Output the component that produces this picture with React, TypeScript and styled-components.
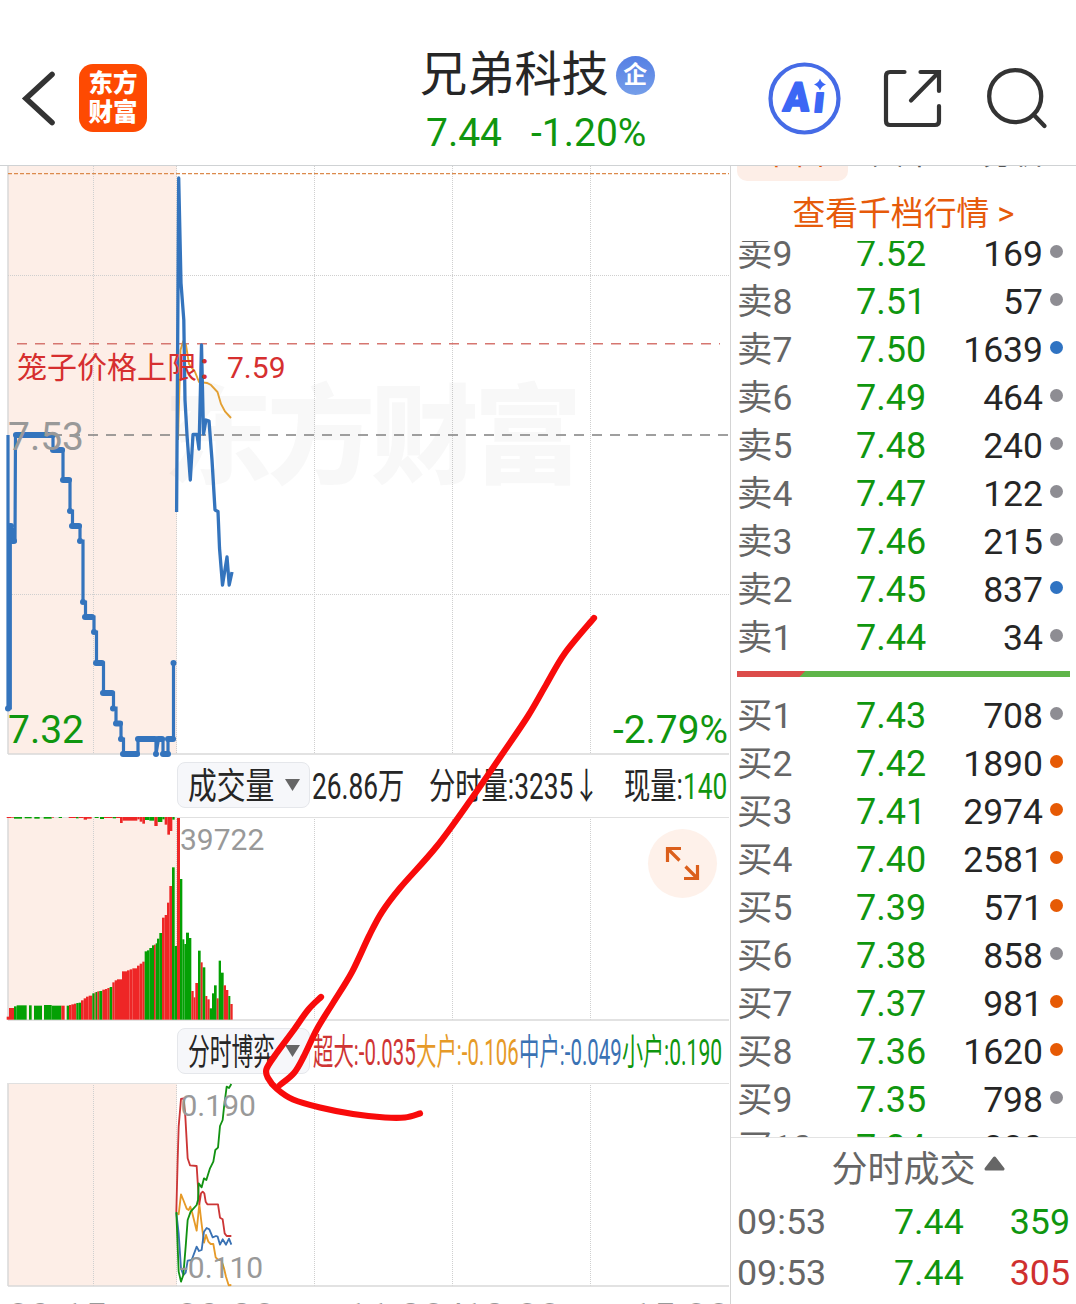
import React from "react";
import styled, { createGlobalStyle } from "styled-components";

const GREEN = "#0f960f";
const RED = "#cf302f";
const BLUE = "#3474bd";
const ORANGE = "#e65a0a";
const GRID = "#cfcfcf";

const Global = createGlobalStyle`
  html, body { margin: 0; padding: 0; background: #fff; }
  body {
    font-family: Roboto, "Noto Sans CJK SC", sans-serif;
    color: #262626;
    overflow: hidden;
  }
  * { box-sizing: border-box; }
`;

const Screen = styled.div`
  position: relative;
  width: 1076px;
  height: 1304px;
  overflow: hidden;
  display: flex;
  flex-direction: column;
  background: #fff;
`;

/* ---------- header ---------- */

const Header = styled.header`
  flex: none;
  height: 166px;
  padding: 0 28px 0 20px;
  display: grid;
  grid-template-columns: 400px 340px 1fr;
  border-bottom: 1px solid #cfd2d4;
`;

const HeaderLeft = styled.div`
  display: flex;
  align-items: center;
  gap: 19px;
  padding-top: 31px;
`;

const Logo = styled.div`
  width: 68px;
  height: 68px;
  border-radius: 14px;
  background: #fe4a02;
  color: #fff;
  font-weight: 900;
  font-size: 24.5px;
  line-height: 28.5px;
  text-align: center;
  padding-top: 6px;
`;

const HeaderTitle = styled.div`
  padding-top: 46px;
`;

const NameLine = styled.div`
  display: flex;
  align-items: center;
  gap: 7px;
  height: 58px;
`;

const Name = styled.h1`
  margin: 0;
  font-size: 47.2px;
  font-weight: 400;
  line-height: 60px;
`;

const CompanyBadge = styled.span`
  width: 39px;
  height: 39px;
  border-radius: 50%;
  background: linear-gradient(#557fe4, #759ee9);
  color: #fff;
  font-size: 24px;
  font-weight: 700;
  line-height: 38px;
  text-align: center;
`;

const QuoteLine = styled.div`
  display: flex;
  gap: 29px;
  padding: 1px 0 0 6px;
  font-size: 39px;
  line-height: 57px;
  color: ${GREEN};
`;

const HeaderActions = styled.div`
  display: flex;
  align-items: center;
  gap: 42px;
  padding: 32px 0 0 8px;

  & > :last-child {
    margin-left: 1px;
  }
`;

/* ---------- body ---------- */

const Body = styled.div`
  flex: 1;
  display: flex;
  min-height: 0;
`;

const Charts = styled.main`
  width: 730px;
  flex: none;
  display: flex;
  flex-direction: column;
`;

const Chart = styled.svg`
  display: block;
  flex: none;
  overflow: visible;
`;

const AxisText = styled.text<{ $size?: number; $color?: string }>`
  font-family: Roboto, "Noto Sans CJK SC", sans-serif;
  font-size: ${(p) => p.$size ?? 30}px;
  fill: ${(p) => p.$color ?? "#999"};
`;

const Watermark = styled.text`
  font-family: "Noto Sans CJK SC", sans-serif;
  font-size: 108px;
  font-weight: 900;
  fill: rgba(90, 90, 90, 0.045);
`;

const IndicatorBar = styled.div<{ $h: number; $top: number }>`
  flex: none;
  height: ${(p) => p.$h}px;
  padding: ${(p) => p.$top}px 0 0 177px;
  display: flex;
  align-items: flex-start;
`;

const Picker = styled.button`
  flex: none;
  width: 133px;
  height: 46px;
  margin: 0;
  padding: 0 9px 0 10px;
  display: flex;
  align-items: center;
  justify-content: space-between;
  border: 1px solid #e5e7eb;
  border-radius: 8px;
  background: #f6f7fa;
  font-family: inherit;
  color: #262626;
`;

const Slot = styled.span<{ $w: number; $gap?: number }>`
  display: block;
  flex: none;
  width: ${(p) => p.$w}px;
  height: 46px;
  margin-left: ${(p) => p.$gap ?? 0}px;
`;

const Squeezed = styled.span<{ $scale: number; $color?: string }>`
  display: inline-block;
  white-space: nowrap;
  font-size: 36px;
  line-height: 50px;
  color: ${(p) => p.$color ?? "inherit"};
  transform: scaleX(${(p) => p.$scale});
  transform-origin: left center;
`;

const Green = styled.span`
  color: ${GREEN};
`;

const VolumeArea = styled.div`
  position: relative;
  height: 203px;
  flex: none;
`;

const Expand = styled.button`
  position: absolute;
  top: 12px;
  right: 13px;
  width: 69px;
  height: 69px;
  padding: 0;
  border: 0;
  border-radius: 50%;
  background: #fef1ea;
`;

const TimeAxis = styled.div`
  display: flex;
  justify-content: space-between;
  padding: 10px 0 0 7px;
  font-size: 40px;
  line-height: 46px;
  color: #999;
  white-space: nowrap;
`;

/* ---------- order book ---------- */

const Book = styled.aside`
  flex: 1;
  display: flex;
  flex-direction: column;
  border-left: 1px solid #d4d4d4;
  min-width: 0;
`;

const Tabs = styled.div`
  flex: none;
  height: 15px;
  padding-left: 6px;
  display: flex;
  align-items: flex-end;
  overflow: hidden;
`;

const Tab = styled.div<{ $active?: boolean }>`
  width: 111px;
  height: 54px;
  line-height: 52px;
  border-radius: 10px;
  font-size: 32px;
  text-align: center;
  background: ${(p) => (p.$active ? "#fdeee7" : "transparent")};
  color: ${(p) => (p.$active ? ORANGE : "#555")};
`;

const MoreLevels = styled.a`
  flex: none;
  height: 60px;
  line-height: 66px;
  font-size: 32.8px;
  text-align: center;
  color: ${ORANGE};
`;

const Levels = styled.div<{ $h: number; $end?: boolean }>`
  flex: none;
  height: ${(p) => p.$h}px;
  overflow: hidden;
  padding: 0 13px 0 6px;
  display: flex;
  flex-direction: column;
  justify-content: ${(p) => (p.$end ? "flex-end" : "flex-start")};
`;

const Level = styled.div`
  flex: none;
  height: 48px;
  display: grid;
  grid-template-columns: 119px 1fr 20px;
  font-size: 36px;
  line-height: 49px;
`;

const LevelName = styled.span`
  font-size: 35.5px;
  color: #666;
`;

const Pair = styled.span`
  display: flex;
  justify-content: space-between;
`;

const Price = styled.span`
  color: ${GREEN};
`;

const Quantity = styled.span`
  font-size: 35.5px;
`;

const Dot = styled.i<{ $color: string }>`
  width: 13px;
  height: 13px;
  margin: 15px 0 0 7px;
  border-radius: 50%;
  background: ${(p) => p.$color};
`;

const Ratio = styled.div`
  flex: none;
  height: 6px;
  margin: 9px 6px 15px;
  background: linear-gradient(135deg, #dc4c4a 0 48px, #5fb54a 48.5px);
`;

const TradesTitle = styled.div`
  flex: none;
  height: 60px;
  border-top: 1px solid #e3e3e3;
  display: flex;
  justify-content: center;
  gap: 8px;
  padding: 0 29px 0 58px;
  font-size: 36px;
  line-height: 64px;
  color: #666;
`;

const Trade = styled.div`
  flex: none;
  display: grid;
  grid-template-columns: 157px 1fr auto;
  padding: 0 6px;
  height: 51px;
  font-size: 35.8px;
  line-height: 51px;
  color: #666;
`;

const TradeVolume = styled.span<{ $up?: boolean }>`
  color: ${(p) => (p.$up ? RED : GREEN)};
`;

const Annotation = styled.svg`
  position: absolute;
  left: 0;
  top: 0;
  pointer-events: none;
`;

/* ---------- data ---------- */

type LevelRow = [string, string, string, "g" | "b" | "o"];

const dotColors = { g: "#8e8d93", b: "#2f73c2", o: "#e65a05" };

const sells: LevelRow[] = [
  ["卖9", "7.52", "169", "g"],
  ["卖8", "7.51", "57", "g"],
  ["卖7", "7.50", "1639", "b"],
  ["卖6", "7.49", "464", "g"],
  ["卖5", "7.48", "240", "g"],
  ["卖4", "7.47", "122", "g"],
  ["卖3", "7.46", "215", "g"],
  ["卖2", "7.45", "837", "b"],
  ["卖1", "7.44", "34", "g"],
];

const buys: LevelRow[] = [
  ["买1", "7.43", "708", "g"],
  ["买2", "7.42", "1890", "o"],
  ["买3", "7.41", "2974", "o"],
  ["买4", "7.40", "2581", "o"],
  ["买5", "7.39", "571", "o"],
  ["买6", "7.38", "858", "g"],
  ["买7", "7.37", "981", "o"],
  ["买8", "7.36", "1620", "o"],
  ["买9", "7.35", "798", "g"],
  ["买10", "7.34", "880", "g"],
];

// horizontal runs of the auction price: [x from, x to, y]
const auctionRuns: [number, number, number][] = [
  [8, 8, 708.5], [10, 11, 526], [12, 14, 541], [16, 53, 435], [53, 62, 450],
  [63, 69, 480], [70, 70, 511], [72, 79, 526], [80, 80, 541], [83, 83, 602],
  [85, 92, 617], [94, 94, 632], [96, 102, 663], [103, 112, 693], [113, 113, 708.5],
  [116, 120, 723.5], [121, 121, 739], [123, 137, 754], [138, 155, 739],
  [156, 156, 754], [158, 162, 739], [163, 168, 754], [168, 173, 739], [173.5, 173.5, 663],
];

const auctionLine =
  "8,708 8,435 8,708 10.3,708 10.3,526 12,541 12,528 13,541 15,541 15.5,435 53,435 53,450 63,450 63,480 70,480 70,511 72.5,511 72.5,526 80,526 80,541 83,541 83,602 85.5,602 85.5,617 94,617 94,632 96.5,632 96.5,663 103.5,663 103.5,693 113.5,693 113.5,708 116,708 116,723 121,723 121,739 123.5,739 123.5,754 138,754 138,739 156,739 156,754 158.5,739 163,739 163,754 168,754 168,739 173.5,739 173.5,663";

const priceLine =
  "176.6,512 178.7,178 181,283 183.8,320 185,400 187,435 190.3,480 193,434.5 197,434.5 199,449 201.5,345 203.5,434 206,420 209,421 212,460 215,510 218,511.5 219.5,548 222.5,585 227,557 229.2,585 232,572";

const averageLine =
  "178,440 180.5,350 183,342 186,345 189,364 195,372 199,382 207,383 211,385 217.5,392 221,404 225,411.5 231,418";

// volume bars: [x from, x to, top, colour]; three units to the pixel
type Bar = [number, number, number, "r" | "g"];

const volumeBars: Bar[] = [
  [20, 27, 800, "r"], [27, 42, 774, "r"], [42, 50, 769, "g"], [50, 80, 766, "g"],
  [87, 95, 766, "g"], [102, 126, 767, "g"], [132, 155, 765, "g"], [155, 184, 767, "g"],
  [184, 194, 767, "r"], [200, 207, 767, "g"], [207, 214, 765, "r"], [214, 222, 763, "r"],
  [222, 229, 761, "r"], [229, 236, 759, "g"], [236, 243, 758, "g"], [243, 251, 751, "r"],
  [251, 258, 745, "r"], [258, 266, 740, "r"], [266, 277, 737, "r"], [277, 284, 730, "g"],
  [284, 287, 727, "r"], [287, 292, 726, "g"], [292, 298, 724, "r"], [298, 307, 723, "g"],
  [307, 315, 719, "r"], [315, 322, 717, "r"], [322, 329, 714, "r"], [329, 337, 711, "g"],
  [337, 344, 697, "r"], [344, 351, 691, "r"], [351, 366, 688, "r"], [366, 381, 664, "r"],
  [381, 389, 661, "r"], [389, 397, 658, "r"], [397, 411, 655, "r"], [411, 419, 647, "r"],
  [419, 427, 641, "r"], [427, 434, 635, "r"], [434, 441, 604, "g"], [441, 448, 601, "g"],
  [448, 456, 594, "g"], [456, 462, 586, "g"], [462, 467, 584, "r"], [467, 471, 580, "g"],
  [471, 478, 566, "g"], [478, 486, 549, "g"], [486, 494, 503, "r"], [494, 501, 495, "r"],
  [501, 508, 458, "r"], [508, 516, 408, "r"], [516, 524, 352, "g"], [524, 531, 588, "g"],
  [531, 540, 204, "r"], [540, 547, 387, "g"], [547, 553, 568, "g"], [553, 558, 582, "g"],
  [558, 567, 548, "g"], [567, 574, 564, "g"], [574, 581, 723, "r"], [581, 586, 742, "r"],
  [586, 594, 699, "r"], [594, 602, 602, "g"], [602, 608, 637, "r"], [608, 616, 652, "g"],
  [616, 622, 738, "r"], [622, 629, 748, "r"], [629, 636, 775, "g"], [636, 642, 730, "g"],
  [642, 650, 706, "g"], [650, 656, 745, "r"], [656, 663, 632, "g"], [663, 671, 668, "g"],
  [671, 678, 706, "r"], [678, 685, 720, "r"], [685, 691, 738, "g"], [691, 698, 762, "r"],
];

const unmatchedBars: Bar[] = [
  [20, 33, 204, "r"], [33, 42, 203, "r"], [42, 66, 206, "g"], [74, 95, 205, "g"],
  [103, 119, 206, "g"], [131, 155, 206, "g"], [155, 162, 203, "r"], [176, 186, 204, "g"],
  [206, 228, 204, "r"], [228, 236, 205, "g"], [236, 251, 204, "r"], [251, 261, 209, "r"],
  [261, 275, 206, "r"], [284, 296, 204, "g"], [300, 312, 207, "g"], [312, 338, 204, "r"],
  [338, 348, 205, "g"], [348, 360, 204, "r"], [360, 368, 219, "r"], [368, 412, 212, "r"],
  [412, 419, 208, "r"], [419, 427, 215, "r"], [427, 435, 221, "r"], [435, 448, 210, "g"],
  [448, 463, 212, "g"], [463, 473, 228, "r"], [473, 487, 216, "g"], [487, 494, 208, "g"],
  [494, 502, 224, "r"], [502, 510, 254, "r"], [510, 517, 243, "r"], [517, 524, 209, "g"],
];

const flows: [string, string][] = [
  ["#e69a28", "529,578 536,583 543,523 550,540 560,566 566,570 571,560 577,580 590,632 598,552 604,605 612,668 618,645 625,665 632,672 640,672 647,712 655,720 664,720 672,745 678,770 686,796 694,795"],
  ["#cc3636", "529,576 533,420 536,320 543,237 551,235 556,290 563,415 570,436 590,438 594,500 598,552 603,520 608,515 613,520 617,545 622,553 654,553 660,593 668,598 674,640 680,648 694,648"],
  ["#3a72b4", "529,578 536,640 543,745 550,765 557,758 563,722 575,720 590,680 597,693 605,690 612,635 620,624 628,628 638,652 648,648 653,650 660,674 668,658 678,674 687,656 694,674"],
  ["#129212", "529,576 536,755 543,785 550,765 557,680 563,600 572,575 590,555 594,540 596,490 605,502 612,475 619,480 630,445 640,425 646,390 654,383 660,318 668,300 672,262 680,200 687,204 694,192"],
];

type Point = [number, number];

const shaft: Point[] = [
  [594, 618], [565, 653], [546, 685], [528, 716], [503, 753], [472, 798], [437, 846],
  [400, 888], [382, 912], [369, 936], [352, 972], [333, 1003], [317, 1029], [304, 1056],
  [294, 1073], [280, 1085],
];

const head: Point[] = [
  [321, 997], [308, 1010], [293, 1031], [276, 1054], [266.5, 1069], [268, 1078],
  [277, 1089], [293, 1099.5], [320, 1107.5], [353, 1114], [385, 1117.5], [405, 1117.5],
  [420, 1113.5],
];

/* ---------- pieces ---------- */

// a smooth curve through all of the points
function smooth(pts: Point[]) {
  let d = `M${pts[0][0]} ${pts[0][1]}`;
  for (let i = 0; i < pts.length - 1; i++) {
    const p0 = pts[Math.max(i - 1, 0)];
    const p1 = pts[i];
    const p2 = pts[i + 1];
    const p3 = pts[Math.min(i + 2, pts.length - 1)];
    const c1 = [p1[0] + (p2[0] - p0[0]) / 6, p1[1] + (p2[1] - p0[1]) / 6];
    const c2 = [p2[0] - (p3[0] - p1[0]) / 6, p2[1] - (p3[1] - p1[1]) / 6];
    d += `C${c1[0]} ${c1[1]} ${c2[0]} ${c2[1]} ${p2[0]} ${p2[1]}`;
  }
  return d;
}

const barFill = { r: "#ee2626", g: "#04a004" };

function Frame({ top, bottom }: { top: number; bottom: number }) {
  return (
    <g>
      <rect x={8} y={top} width={169} height={bottom - top} fill="#fdeee7" />
      {[93.5, 176.5, 314.5, 452.5, 590.5].map((x) => (
        <line key={x} x1={x} x2={x} y1={top} y2={bottom} stroke={GRID} strokeDasharray="1 1" />
      ))}
      <line x1={8} x2={8} y1={top} y2={bottom} stroke="#d8d8d8" strokeWidth={1.5} />
      <line x1={8} x2={729} y1={bottom} y2={bottom} stroke="#d8d8d8" strokeWidth={1.6} />
    </g>
  );
}

function Triangle() {
  return (
    <svg width={15} height={12} viewBox="0 0 15 12">
      <path d="M0 0H15L7.5 12Z" fill="#666" />
    </svg>
  );
}

function PriceChart() {
  return (
    <Chart width={730} height={588} viewBox="0 166 730 588">
      <Frame top={166} bottom={754} />
      {[275.5, 594.5].map((y) => (
        <line key={y} x1={8} x2={729} y1={y} y2={y} stroke={GRID} strokeDasharray="1 1" />
      ))}
      <Watermark x={164} y={475} textLength={418}>东方财富</Watermark>
      <line x1={8} x2={729} y1={173.6} y2={173.6} stroke="#dc8a4c" strokeWidth={1.4} strokeDasharray="4 2" />
      <line x1={17} x2={720} y1={343.7} y2={343.7} stroke="#d67670" strokeWidth={1.5} strokeDasharray="10 8" />
      <line x1={16} x2={729} y1={435} y2={435} stroke="#808080" strokeWidth={1.6} strokeDasharray="10 8" />
      <polyline points={averageLine} fill="none" stroke="#e3a033" strokeWidth={1.9} />
      <g stroke={BLUE} fill="none">
        <polyline points={auctionLine} strokeWidth={3.2} />
        {auctionRuns.map(([a, b, y], i) => (
          <line key={i} x1={a} x2={b + 0.01} y1={y} y2={y} strokeWidth={6} strokeLinecap="round" />
        ))}
        <polyline points={priceLine} strokeWidth={3.3} strokeLinejoin="round" />
      </g>
      <AxisText x={17} y={378} $color="#d62f2f">笼子价格上限：7.59</AxisText>
      <AxisText x={8} y={450} $size={39}>7.53</AxisText>
      <AxisText x={8} y={743} $size={39} $color={GREEN}>7.32</AxisText>
      <AxisText x={728} y={743} $size={38.9} $color={GREEN} textAnchor="end">-2.79%</AxisText>
    </Chart>
  );
}

function VolumeChart() {
  return (
    <Chart width={730} height={203} viewBox="0 817 730 203">
      <Frame top={817} bottom={1020} />
      <line x1={8} x2={729} y1={817.5} y2={817.5} stroke="#e0e0e0" />
      {unmatchedBars.map(([a, b, y, c]) => (
        <rect key={a} x={a / 3} y={817} width={(b - a) / 3} height={(y - 201) / 3} fill={barFill[c]} />
      ))}
      {volumeBars.map(([a, b, y, c]) => (
        <rect key={a} x={a / 3} y={750 + y / 3} width={(b - a) / 3} height={(809 - y) / 3} fill={barFill[c]} />
      ))}
      <AxisText x={180} y={850}>39722</AxisText>
    </Chart>
  );
}

function FlowChart() {
  return (
    <Chart width={730} height={203} viewBox="0 1083 730 203">
      <Frame top={1083} bottom={1286} />
      <line x1={8} x2={729} y1={1083.5} y2={1083.5} stroke="#e0e0e0" />
      <g transform="translate(0 1020) scale(0.33333)">
        {flows.map(([color, points]) => (
          <polyline key={color} points={points} fill="none" stroke={color} strokeWidth={5.5} strokeLinejoin="round" />
        ))}
      </g>
      <AxisText x={180.5} y={1116}>0.190</AxisText>
      <AxisText x={179.5} y={1278}>-0.110</AxisText>
    </Chart>
  );
}

function Rows({ rows }: { rows: LevelRow[] }) {
  return (
    <>
      {rows.map(([name, price, qty, dot]) => (
        <Level key={name}>
          <LevelName>{name}</LevelName>
          <Pair>
            <Price>{price}</Price>
            <Quantity>{qty}</Quantity>
          </Pair>
          <Dot $color={dotColors[dot]} />
        </Level>
      ))}
    </>
  );
}

export default function App() {
  return (
    <>
      <Global />
      <Screen>
        <Header>
          <HeaderLeft>
            <svg width={40} height={60} viewBox="20 68 40 60" fill="none" stroke="#333" strokeWidth={5.6} strokeLinecap="round">
              <path d="M52 74.5L26 98.5L52 122.5" />
            </svg>
            <Logo>东方<br />财富</Logo>
          </HeaderLeft>
          <HeaderTitle>
            <NameLine>
              <Name>兄弟科技</Name>
              <CompanyBadge>企</CompanyBadge>
            </NameLine>
            <QuoteLine>
              <span>7.44</span>
              <span>-1.20%</span>
            </QuoteLine>
          </HeaderTitle>
          <HeaderActions>
            <svg width={73} height={73} viewBox="767.5 62 73 73">
              <circle cx={804} cy={98.5} r={34} fill="#fff" stroke="#456be6" strokeWidth={4.2} />
              <g fill="#3c67f5" stroke="#3c67f5" strokeLinejoin="round" fontFamily="Roboto, sans-serif" fontWeight={900}>
                <text transform="translate(782 110.5) skewX(-6)" fontSize={40} strokeWidth={2} textLength={26} lengthAdjust="spacingAndGlyphs">A</text>
                <text transform="translate(812.5 112) skewX(-6)" fontSize={36} strokeWidth={2}>ı</text>
                <path stroke="none" d="M819.5 78.5Q821 83 825.5 84.5Q821 86 819.5 90.5Q818 86 813.5 84.5Q818 83 819.5 78.5Z" />
              </g>
            </svg>
            <svg width={60} height={60} viewBox="883 69 60 60" fill="none" stroke="#333" strokeWidth={4.2} strokeLinecap="round">
              <path d="M904.5 72H890Q886 72 886 76V121Q886 125 890 125H935Q939 125 939 121V106" />
              <path d="M920.5 72H939V91M938 73L911 100.5" />
            </svg>
            <svg width={62} height={62} viewBox="985.5 67.5 62 62" fill="none" stroke="#333" strokeWidth={4.3} strokeLinecap="round">
              <circle cx={1014.7} cy={95.7} r={26} />
              <path d="M1033 114L1044 125.5" />
            </svg>
          </HeaderActions>
        </Header>
        <Body>
          <Charts>
            <PriceChart />
            <IndicatorBar $h={63} $top={8}>
              <Picker>
                <Slot $w={88}><Squeezed $scale={0.8}>成交量</Squeezed></Slot>
                <Triangle />
              </Picker>
              <Slot $w={92} $gap={2}><Squeezed $scale={0.73}>26.86万</Squeezed></Slot>
              <Slot $w={175} $gap={24.5}><Squeezed $scale={0.73}>分时量:3235↓</Squeezed></Slot>
              <Slot $w={104} $gap={20.5}><Squeezed $scale={0.73}>现量:<Green>140</Green></Squeezed></Slot>
            </IndicatorBar>
            <VolumeArea>
              <VolumeChart />
              <Expand>
                <svg width={69} height={69} viewBox="648 829 69 69" fill="none" stroke="#db5f1c" strokeWidth={3.2}>
                  <path d="M681 848.5H667.5V862M667.5 848.5L679.5 860.5" />
                  <path d="M684 878.5H697.5V865M697.5 878.5L685.5 866.5" />
                </svg>
              </Expand>
            </VolumeArea>
            <IndicatorBar $h={63} $top={8}>
              <Picker>
                <Slot $w={88}><Squeezed $scale={0.605}>分时博弈</Squeezed></Slot>
                <Triangle />
              </Picker>
              <Slot $w={103} $gap={2.5}><Squeezed $scale={0.567} $color="#cf3534">超大:-0.035</Squeezed></Slot>
              <Slot $w={103}><Squeezed $scale={0.567} $color="#e69a28">大户:-0.106</Squeezed></Slot>
              <Slot $w={103}><Squeezed $scale={0.567} $color="#3a72b4">中户:-0.049</Squeezed></Slot>
              <Slot $w={102}><Squeezed $scale={0.585} $color={GREEN}>小户:0.190</Squeezed></Slot>
            </IndicatorBar>
            <FlowChart />
            <TimeAxis>
              <span>09:15</span>
              <span>09:30</span>
              <span>11:30/13:00</span>
              <span>15:00</span>
            </TimeAxis>
          </Charts>
          <Book>
            <Tabs>
              <Tab $active>千档</Tab>
              <Tab>大单</Tab>
              <Tab>分价</Tab>
            </Tabs>
            <MoreLevels>查看千档行情 &gt;</MoreLevels>
            <Levels $h={421} $end>
              <Rows rows={sells} />
            </Levels>
            <Ratio />
            <Levels $h={445}>
              <Rows rows={buys} />
            </Levels>
            <TradesTitle>
              分时成交
              <svg width={21} height={59} viewBox="0 0 21 59">
                <path d="M2 31L10.5 20L19 31Z" fill="#666" stroke="#666" strokeWidth={3} strokeLinejoin="round" />
              </svg>
            </TradesTitle>
            <Trade>
              <span>09:53</span>
              <Price>7.44</Price>
              <TradeVolume>359</TradeVolume>
            </Trade>
            <Trade>
              <span>09:53</span>
              <Price>7.44</Price>
              <TradeVolume $up>305</TradeVolume>
            </Trade>
          </Book>
        </Body>
        <Annotation width={1076} height={1304} viewBox="0 0 1076 1304" fill="none" stroke="#f80b0b" strokeWidth={6.2} strokeLinecap="round" strokeLinejoin="round">
          <path d={smooth(shaft)} />
          <path d={smooth(head)} />
        </Annotation>
      </Screen>
    </>
  );
}
